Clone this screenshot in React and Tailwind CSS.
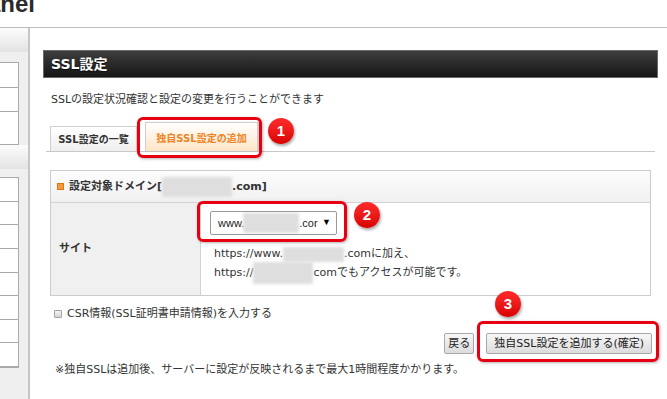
function Blur({ className }) {
  return <span className={`inline-block align-middle bg-[#dedede] blur-[1.5px] ${className}`} />;
}

function Badge({ n, className }) {
  return (
    <div
      className={`absolute w-[26px] h-[26px] rounded-full bg-linear-to-b from-[#ff2a2a] to-[#d80000] shadow-[1px_2px_3px_rgba(0,0,0,0.35)] flex items-center justify-center text-white text-[15px] font-bold font-['Liberation_Sans',sans-serif] ${className}`}
    >
      {n}
    </div>
  );
}

function Sidebar() {
  const rows2 = ['h-[24px]', 'h-[23px]', 'h-[24px]', 'h-[24px]', 'h-[23px]', 'h-[24px]', 'h-[23px]', 'h-[24px]'];
  return (
    <aside className="w-[30px] shrink-0 border-r-2 border-[#c6c6c6] bg-[#efefef] overflow-hidden">
      <div className="h-[24px] bg-linear-to-b from-[#fcfcfc] to-[#e3e3e3]" />
      <div className="mt-[10px] w-[19px] border border-l-0 border-[#aaa] bg-white">
        <div className="h-[25px] border-b border-[#aaa]" />
        <div className="h-[24px] border-b border-[#aaa]" />
        <div className="h-[32px]" />
      </div>
      <div className="h-[24px] bg-linear-to-b from-[#fcfcfc] to-[#e3e3e3]" />
      <div className="mt-[8px] w-[19px] border border-l-0 border-[#aaa] bg-white">
        {rows2.map((h, i) => (
          <div key={i} className={`${h} border-b border-[#aaa]`} />
        ))}
      </div>
    </aside>
  );
}

export default function App() {
  return (
    <div className="relative w-[667px] h-[399px] overflow-hidden bg-white text-[#333] font-['DejaVu_Sans','Noto_Sans_CJK_JP',sans-serif]">
      <header className="h-[28px] border-b border-[#bdbdbd] overflow-hidden">
        <div className="-ml-[29px] -mt-[8px] text-[24px] leading-[24px] font-bold text-[#2b2b2b] font-['Liberation_Sans',sans-serif]">
          Panel
        </div>
      </header>

      <div className="flex h-[371px]">
        <Sidebar />

        <main className="flex-1 pl-[13px] pr-[9px] pt-[22px]">
          <div className="h-[28px] border border-[#6a6a6a] bg-linear-to-b from-[#3e3e3e] to-[#161616] flex items-center pl-[7px]">
            <span className="text-white text-[14px] font-bold leading-none [text-shadow:0_1px_1px_rgba(0,0,0,0.6)]">SSL設定</span>
          </div>

          <p className="mt-[14px] pl-[8px] text-[11px] leading-[16px]">SSLの設定状況確認と設定の変更を行うことができます</p>

          <div className="mt-[14px] mx-[3px] h-[30px] flex items-end border-b border-[#c8c8c8]">
            <div className="ml-[4px] w-[87px] h-[25px] border border-b-0 border-[#cfcfcf] bg-linear-to-b from-white to-[#efefef] flex items-center justify-center text-[10px] font-bold text-[#333]">
              SSL設定の一覧
            </div>
            <div className="ml-[8px] w-[113px] h-[29px] border border-b-0 border-[#cfcfcf] bg-linear-to-b from-white to-[#fde5c6] shadow-[1px_0_1px_rgba(0,0,0,0.2)] flex items-center justify-center pt-[3px] text-[10px] font-bold text-[#ee8427]">
              独自SSL設定の追加
            </div>
          </div>

          <div className="mt-[18px] mx-[7px] border border-[#cccccc]">
            <div className="h-[32px] border-b border-[#d2d2d2] bg-linear-to-b from-[#fdfdfd] to-[#f0f0f0] flex items-center pl-[6px]">
              <span className="w-[7px] h-[7px] bg-[#f49a3c] border border-[#e07812] shrink-0" />
              <span className="ml-[5px] text-[11px] font-bold leading-[16px] flex items-center">
                設定対象ドメイン[
                <Blur className="w-[70px] h-[20px]" />
                .com]
              </span>
            </div>
            <div className="flex h-[92px]">
              <div className="w-[150px] shrink-0 bg-[#f0f0f0] border-r border-[#d2d2d2] flex items-center pl-[8px] text-[11px] font-bold">
                サイト
              </div>
              <div className="flex-1 pl-[9px] pt-[8px]">
                <div className="w-[127px] h-[24px] border border-[#9a9a9a] rounded-[2px] bg-white flex items-center pl-[7px] pr-[5px] text-[11px] text-[#222] font-['Liberation_Sans',sans-serif] overflow-hidden">
                  <span>www.</span>
                  <Blur className="w-[56px] h-[20px] -ml-[1px]" />
                  <span>.cor</span>
                  <span className="ml-auto text-[9px] text-black">▼</span>
                </div>
                <div className="mt-[11px] pl-[4px] text-[11px] leading-[16px]">
                  <div className="flex items-center">
                    https://www.
                    <Blur className="w-[61px] h-[15px]" />
                    .comに加え、
                  </div>
                  <div className="flex items-center">
                    https://
                    <Blur className="w-[60px] h-[22px]" />
                    comでもアクセスが可能です。
                  </div>
                </div>
              </div>
            </div>
          </div>

          <label className="mt-[10px] pl-[11px] flex items-center text-[11px] leading-[16px]">
            <span className="w-[8px] h-[8px] border border-[#a0a0a0] rounded-[1px] bg-linear-to-b from-[#f4f4f4] to-[#d6d6d6] shrink-0" />
            <span className="ml-[5px]">CSR情報(SSL証明書申請情報)を入力する</span>
          </label>

          <div className="mt-[11px] pr-[6px] flex justify-end gap-[12px]">
            <button className="h-[21px] px-[3px] border border-[#a8a8a8] rounded-[2px] bg-linear-to-b from-[#f7f7f7] to-[#dcdcdc] text-[11px] leading-none text-[#222]">
              戻る
            </button>
            <button className="h-[21px] px-[7px] border border-[#a8a8a8] rounded-[2px] bg-linear-to-b from-[#f7f7f7] to-[#dcdcdc] text-[11px] leading-none text-[#222]">
              独自SSL設定を追加する(確定)
            </button>
          </div>

          <p className="mt-[8px] pl-[12px] text-[11px] leading-[16px]">
            ※独自SSLは追加後、サーバーに設定が反映されるまで最大1時間程度かかります。
          </p>
        </main>
      </div>

      {/* annotations */}
      <div className="absolute left-[137px] top-[117px] w-[125px] h-[41px] border-[3px] border-[#e60012] rounded-[6px] shadow-[1px_1px_3px_rgba(0,0,0,0.3)]" />
      <Badge n="1" className="left-[268px] top-[118px]" />
      <div className="absolute left-[197px] top-[201px] w-[150px] h-[41px] border-[3px] border-[#e60012] rounded-[6px] shadow-[1px_1px_3px_rgba(0,0,0,0.3)]" />
      <Badge n="2" className="left-[354px] top-[202px]" />
      <div className="absolute left-[477px] top-[321px] w-[182px] h-[41px] border-[3px] border-[#e60012] rounded-[6px] shadow-[1px_1px_3px_rgba(0,0,0,0.3)]" />
      <Badge n="3" className="left-[495px] top-[291px]" />
    </div>
  );
}
